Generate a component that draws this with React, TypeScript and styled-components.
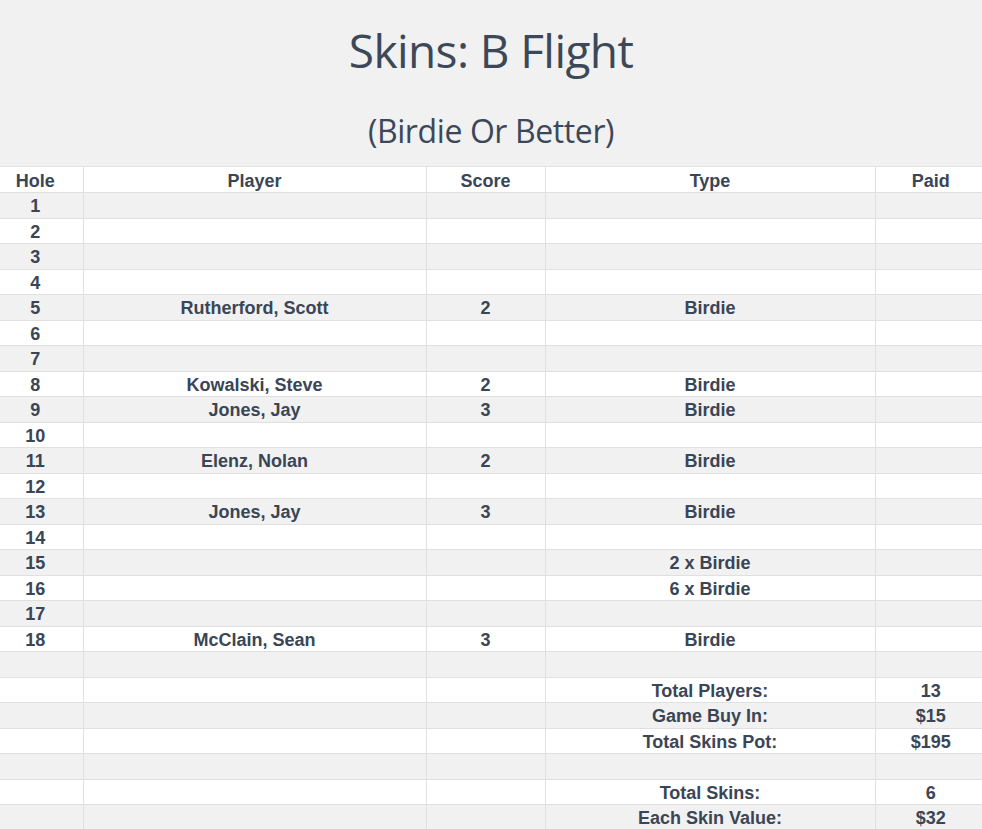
import React from "react";
import styled, { createGlobalStyle } from "styled-components";

const Global = createGlobalStyle`
  html, body { margin: 0; padding: 0; background: #f1f1f1; }
  body { font-family: "Open Sans", "DejaVu Sans", sans-serif; color: #3c4858; }
`;

const Page = styled.div`
  width: 982px;
  background: #f1f1f1;
`;

const Header = styled.header`
  display: flex;
  flex-direction: column;
  align-items: center;
  height: 166px;
`;

const Title = styled.h1`
  margin: 20px 0 0;
  font-family: "Open Sans", sans-serif;
  font-weight: 400;
  font-size: 46px;
  line-height: 60px;
  letter-spacing: -0.6px;
  color: #3c4858;
`;

const Subtitle = styled.h2`
  margin: 30px 0 0;
  font-family: "Open Sans", sans-serif;
  font-weight: 400;
  font-size: 32px;
  line-height: 42px;
  letter-spacing: -0.4px;
  color: #3c4858;
`;

const Table = styled.table`
  width: 982px;
  border-collapse: collapse;
  table-layout: fixed;
  font-family: "Liberation Sans", Arial, sans-serif;
  font-weight: 700;
  font-size: 18px;
  color: #3a4556;
`;

const Row = styled.tr<{ $shade: boolean }>`
  height: 25.5px;
  background: ${(p) => (p.$shade ? "#f1f1f1" : "#ffffff")};
`;

const HeadRow = styled.tr`
  height: 26px;
  background: #ffffff;
`;

const Th = styled.th`
  padding: 2px 0 0;
  border: 1px solid #e0e0e0;
  border-top: 1px solid #e3e3e3;
  text-align: center;
  font-weight: 700;
  line-height: 22px;
  &:first-child { border-left: none; padding-right: 12px; }
  &:last-child { border-right: none; padding-left: 4px; }
`;

const Td = styled.td`
  padding: 2px 0 0;
  border: 1px solid #e0e0e0;
  text-align: center;
  line-height: 22px;
  white-space: nowrap;
  &:first-child { border-left: none; padding-right: 12px; }
  &:last-child { border-right: none; padding-left: 4px; }
`;

type R = [string, string, string, string, string];

const rows: R[] = [
  ["1", "", "", "", ""],
  ["2", "", "", "", ""],
  ["3", "", "", "", ""],
  ["4", "", "", "", ""],
  ["5", "Rutherford, Scott", "2", "Birdie", ""],
  ["6", "", "", "", ""],
  ["7", "", "", "", ""],
  ["8", "Kowalski, Steve", "2", "Birdie", ""],
  ["9", "Jones, Jay", "3", "Birdie", ""],
  ["10", "", "", "", ""],
  ["11", "Elenz, Nolan", "2", "Birdie", ""],
  ["12", "", "", "", ""],
  ["13", "Jones, Jay", "3", "Birdie", ""],
  ["14", "", "", "", ""],
  ["15", "", "", "2 x Birdie", ""],
  ["16", "", "", "6 x Birdie", ""],
  ["17", "", "", "", ""],
  ["18", "McClain, Sean", "3", "Birdie", ""],
  ["", "", "", "", ""],
  ["", "", "", "Total Players:", "13"],
  ["", "", "", "Game Buy In:", "$15"],
  ["", "", "", "Total Skins Pot:", "$195"],
  ["", "", "", "", ""],
  ["", "", "", "Total Skins:", "6"],
  ["", "", "", "Each Skin Value:", "$32"],
];

export default function App() {
  return (
    <Page>
      <Global />
      <Header>
        <Title>Skins: B Flight</Title>
        <Subtitle>(Birdie Or Better)</Subtitle>
      </Header>
      <Table>
        <colgroup>
          <col style={{ width: 83 }} />
          <col style={{ width: 343 }} />
          <col style={{ width: 119 }} />
          <col style={{ width: 330 }} />
          <col style={{ width: 107 }} />
        </colgroup>
        <thead>
          <HeadRow>
            <Th>Hole</Th>
            <Th>Player</Th>
            <Th>Score</Th>
            <Th>Type</Th>
            <Th>Paid</Th>
          </HeadRow>
        </thead>
        <tbody>
          {rows.map((r, i) => (
            <Row key={i} $shade={i % 2 === 0}>
              {r.map((c, j) => (
                <Td key={j}>{c}</Td>
              ))}
            </Row>
          ))}
        </tbody>
      </Table>
    </Page>
  );
}
